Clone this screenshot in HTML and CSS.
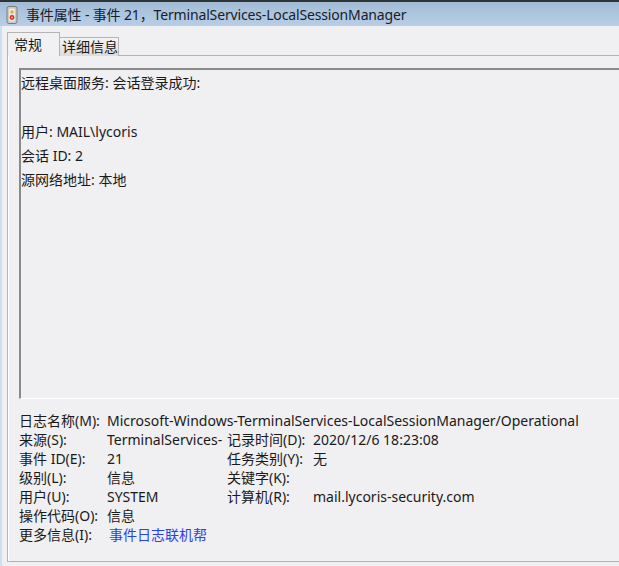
FILE: index.html
```html
<!DOCTYPE html>
<html lang="zh-CN">
<head>
<meta charset="utf-8">
<title>事件属性</title>
<link rel="stylesheet" href="styles.css">
</head>
<body>
<div class="topstrip"></div>
<div class="titlebar">
  <svg class="appicon" width="12" height="18" viewBox="0 0 12 18">
    <rect x="1" y="0.5" width="10" height="17" rx="2" fill="#c9c9c9" stroke="#7d7d7d"/>
    <rect x="3" y="2.5" width="6" height="13" rx="1.5" fill="#e8e8e8"/>
    <circle cx="6" cy="6" r="1.7" fill="#e6b020"/>
    <circle cx="6" cy="11.5" r="2.4" fill="#d83020"/>
    <circle cx="6" cy="11.5" r="1" fill="#f4d040"/>
  </svg>
  <span class="title">事件属性 - 事件 21，TerminalServices-LocalSessionManager</span>
</div>
<div class="frame">
  <div class="tabs">
    <div class="tab active">常规</div>
    <div class="tab">详细信息</div>
  </div>
  <div class="panel">
    <div class="msgbox">
      <div class="line">远程桌面服务: 会话登录成功:</div>
      <div class="line">&nbsp;</div>
      <div class="line">用户: MAIL\lycoris</div>
      <div class="line">会话 ID: 2</div>
      <div class="line">源网络地址: 本地</div>
    </div>
    <div class="details">
      <div class="lbl">日志名称(M):</div>
      <div class="val span3">Microsoft-Windows-TerminalServices-LocalSessionManager/Operational</div>
      <div class="lbl">来源(S):</div>
      <div class="val">TerminalServices-</div>
      <div class="lbl">记录时间(D):</div>
      <div class="val">2020/12/6 18:23:08</div>
      <div class="lbl">事件 ID(E):</div>
      <div class="val">21</div>
      <div class="lbl">任务类别(Y):</div>
      <div class="val">无</div>
      <div class="lbl">级别(L):</div>
      <div class="val">信息</div>
      <div class="lbl">关键字(K):</div>
      <div class="val"></div>
      <div class="lbl">用户(U):</div>
      <div class="val">SYSTEM</div>
      <div class="lbl">计算机(R):</div>
      <div class="val">mail.lycoris-security.com</div>
      <div class="lbl">操作代码(O):</div>
      <div class="val span3">信息</div>
      <div class="lbl">更多信息(I):</div>
      <div class="val span3 link">事件日志联机帮</div>
    </div>
  </div>
</div>
</body>
</html>
```
FILE: styles.css
```css
html, body {
  margin: 0;
  padding: 0;
  background: #f0eff1;
  font-family: "Noto Sans", "Noto Sans CJK SC", sans-serif;
  color: #1a1a1a;
  overflow: hidden;
}
.topstrip {
  height: 2px;
  background: #2f3437;
}
.titlebar {
  height: 24px;
  background: linear-gradient(#a3bcd6, #b8cee6);
  display: flex;
  align-items: center;
  padding-left: 6px;
  gap: 8px;
}
.appicon {
  flex: none;
  margin-top: 1px;
}
.title {
  font-size: 14px;
  letter-spacing: -0.15px;
  color: #16202a;
  white-space: nowrap;
}
.frame {
  border-left: 2px solid #cddff1;
  padding-left: 5px;
  padding-top: 6px;
  height: 540px;
  box-sizing: border-box;
}
.tabs {
  display: flex;
  align-items: flex-end;
  height: 24px;
  position: relative;
  z-index: 1;
}
.tab {
  font-size: 14px;
  line-height: 18px;
  height: 19px;
  width: 59px;
  box-sizing: border-box;
  padding: 0 0 0 2px;
  border: 1px solid #b4b4b4;
  border-bottom: none;
  background: linear-gradient(#f3f3f3, #dcdcdc);
  white-space: nowrap;
}
.tab.active {
  height: 24px;
  line-height: 23px;
  width: 53px;
  padding: 0 0 0 6px;
  background: #f1f0f2;
}
.tab.active + .tab {
  border-left: none;
}
.panel {
  border: 1px solid #b4b4b4;
  border-right: none;
  box-shadow: inset 1px 0 0 #ffffff;
  height: 507px;
  box-sizing: border-box;
  padding: 12px 0 0 11px;
  margin-top: -1px;
}
.msgbox {
  border-top: 2px solid #8a8a8a;
  border-left: 2px solid #8a8a8a;
  border-bottom: 1px solid #ffffff;
  height: 331px;
  box-sizing: border-box;
  padding: 1px 0 0 0;
  font-size: 14px;
  line-height: 24.3px;
}
.details {
  display: grid;
  grid-template-columns: 88px 120px 86px auto;
  grid-auto-rows: 19px;
  margin-top: 12px;
  font-size: 14px;
  line-height: 19px;
  white-space: nowrap;
}
.span3 {
  grid-column: span 3;
}
.link {
  color: #2a3ff0;
  padding-left: 2px;
}
```
